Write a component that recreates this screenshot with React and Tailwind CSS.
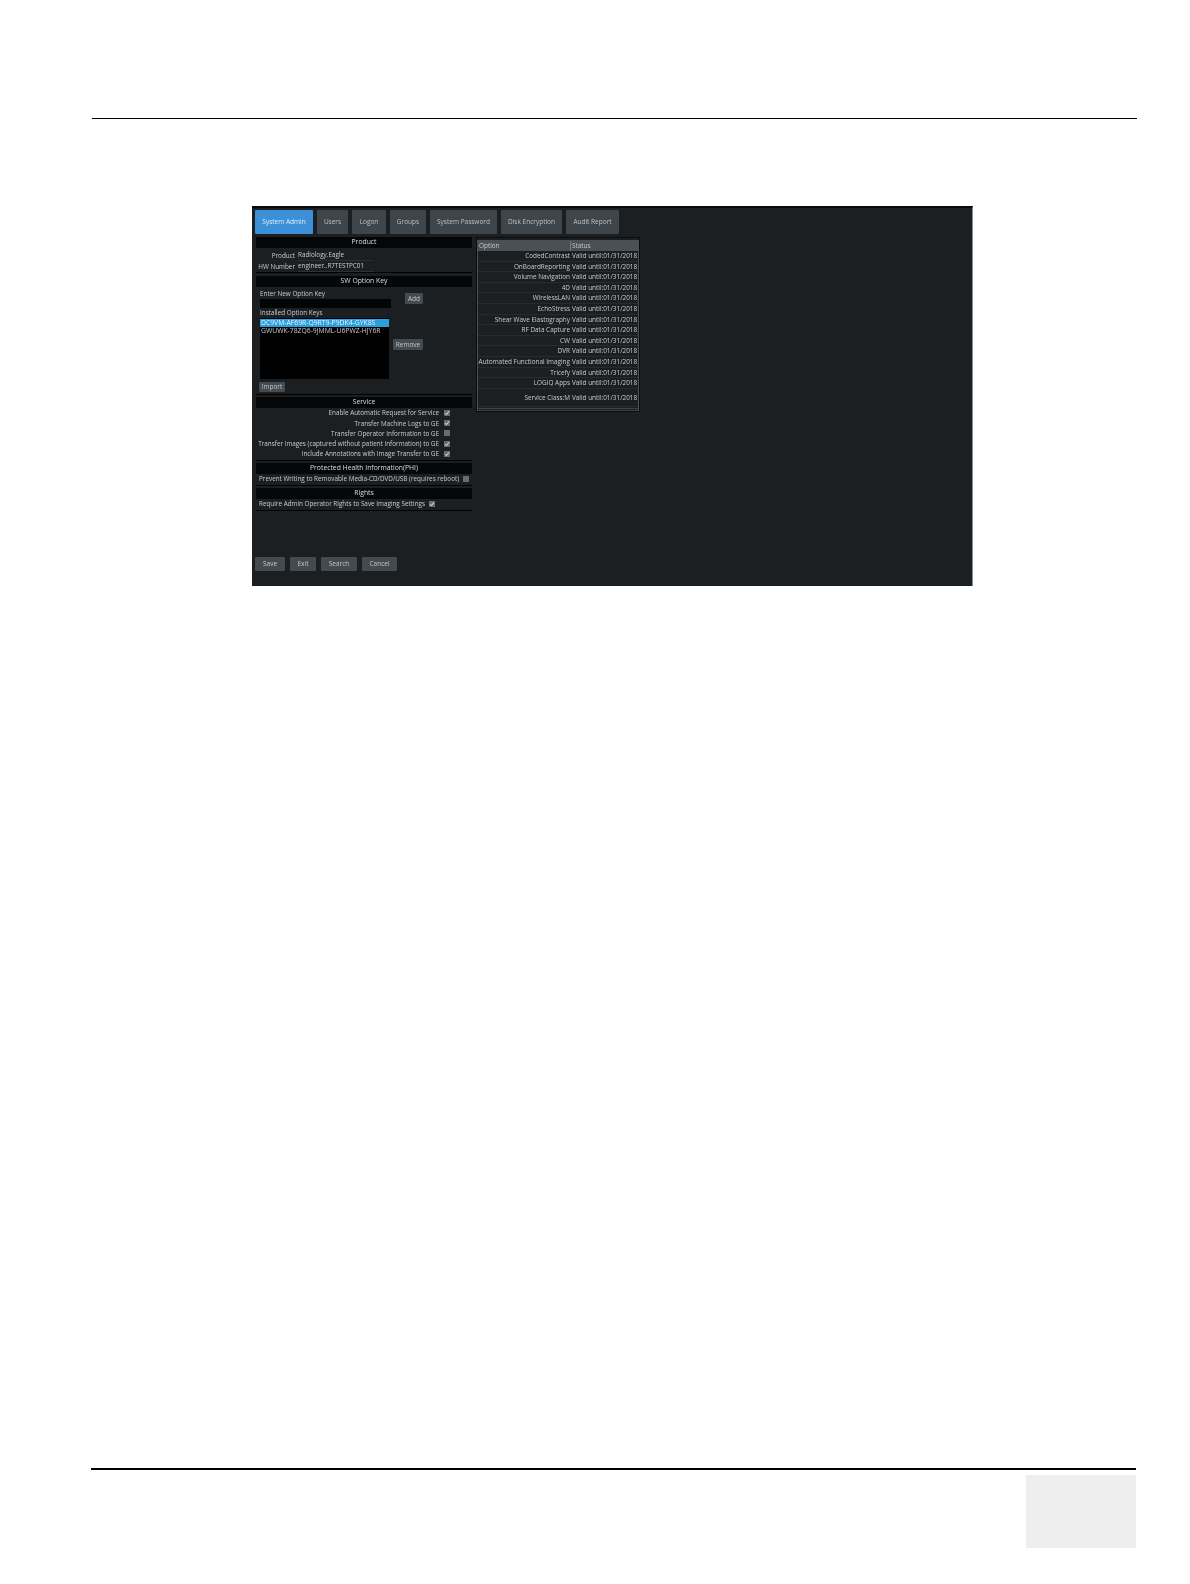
import React from 'react';

const tabs = [
    { label: 'System Admin', width: 'w-[58px]', active: true },
    { label: 'Users', width: 'w-[31px]' },
    { label: 'Logon', width: 'w-[34px]' },
    { label: 'Groups', width: 'w-[36px]' },
    { label: 'System Password', width: 'w-[67px]' },
    { label: 'Disk Encryption', width: 'w-[61px]' },
    { label: 'Audit Report', width: 'w-[53px]' },
];

const serviceRows = [
    { label: 'Enable Automatic Request for Service', checked: true },
    { label: 'Transfer Machine Logs to GE', checked: true },
    { label: 'Transfer Operator Information to GE', checked: false },
    { label: 'Transfer Images (captured without patient information) to GE', checked: true },
    { label: 'Include Annotations with Image Transfer to GE', checked: true },
];

const options = [
    'CodedContrast',
    'OnBoardReporting',
    'Volume Navigation',
    '4D',
    'WirelessLAN',
    'EchoStress',
    'Shear Wave Elastography',
    'RF Data Capture',
    'CW',
    'DVR',
    'Automated Functional Imaging',
    'Tricefy',
    'LOGIQ Apps',
];

const Checkbox = ({ checked }) => (
    <span className="flex h-[6px] w-[6px] shrink-0 items-center justify-center bg-[#666d72]">
        {checked && (
            <svg viewBox="0 0 6 6" className="h-[6px] w-[6px]" fill="none" stroke="#f2f4f5" strokeWidth="1">
                <path d="M1 3.2 2.4 4.6 5 1.4" />
            </svg>
        )}
    </span>
);

const SectionHead = ({ title }) => (
    <div className="flex h-[11px] items-center justify-center bg-[#050607] text-[6.8px] text-[#dcdfe0]">{title}</div>
);

const SmallButton = ({ label, className }) => (
    <div className={`flex items-center justify-center rounded-[1px] bg-[#434b50] text-[6.5px] text-[#c3c7ca] ${className}`}>
        {label}
    </div>
);

const OptionRow = ({ option, className = 'h-[10.6px]' }) => (
    <div className={`flex items-center border-b border-[#262b2f] ${className}`}>
        <span className="w-[92px] text-right whitespace-nowrap">{option}</span>
        <span className="flex-1 pl-[2px] whitespace-nowrap">Valid until:01/31/2018</span>
    </div>
);

const App = () => {
    return (
        <div className="relative flex h-[1584px] w-[1190px] flex-col bg-white font-['Open_Sans',sans-serif]">
            <div className="mt-[118px] ml-[92px] h-px w-[1045px] bg-black" />

            {/* Screenshot of the admin page */}
            <div className="mt-[87px] ml-[252px] h-[380px] w-[721px] border-t-2 border-r border-t-[#08090a] border-r-[#8a8d8f] bg-[#1b1f22] blur-[0.35px]">
                <div className="flex gap-[4px] pt-[2px] pl-[3px]">
                    {tabs.map((tab) => (
                        <div
                            key={tab.label}
                            className={`flex h-[24px] items-center justify-center rounded-[1px] text-[6.5px] whitespace-nowrap ${tab.width} ${tab.active ? 'bg-[#3c90d8] text-[#e3eff9]' : 'bg-[#3e464b] text-[#bcc1c4]'}`}
                        >
                            {tab.label}
                        </div>
                    ))}
                </div>

                <div className="mt-[3px] ml-[4px] flex items-start gap-[4px]">
                    {/* Left column */}
                    <div className="flex w-[216px] flex-col gap-[2px] text-[6.35px] text-[#c8cccf]">
                        <section className="mb-px border-b border-black">
                            <SectionHead title="Product" />
                            <div className="flex h-[24px] flex-col pt-[2px]">
                                <div className="flex h-[12px] items-center">
                                    <span className="w-[39px] text-right">Product</span>
                                    <span className="ml-[3px] w-[74px] border-b border-[#2b3135]">Radiology.Eagle</span>
                                </div>
                                <div className="flex h-[12px] items-center">
                                    <span className="w-[39px] text-right whitespace-nowrap">HW Number</span>
                                    <span className="ml-[3px] w-[76px] border-b border-[#2b3135]">engineer..R7TESTPC01</span>
                                </div>
                            </div>
                        </section>

                        <section className="border-b border-black">
                            <SectionHead title="SW Option Key" />
                            <div className="flex h-[107px] pl-[4px]">
                                <div className="w-[131px]">
                                    <div className="flex h-[12px] items-end">Enter New Option Key</div>
                                    <div className="h-[9px] bg-[#030404]" />
                                    <div className="flex h-[10px] items-end">Installed Option Keys</div>
                                    <div className="mr-[2px] h-[61px] bg-black pt-px text-[6.8px]">
                                        <div className="flex h-[8px] items-center bg-[#2a9fdd] pl-px whitespace-nowrap text-[#e8f5fc]">DC9VM-AF69R-Q9RT9-P9DK4-GYK8S</div>
                                        <div className="flex h-[8px] items-center pl-px whitespace-nowrap">GWUWK-78ZQ6-9JMML-U6PWZ-HJY6R</div>
                                    </div>
                                    <SmallButton label="Import" className="mt-[3px] -ml-[1px] h-[10px] w-[26px]" />
                                </div>
                                <div className="flex flex-col items-end">
                                    <SmallButton label="Add" className="mt-[6px] h-[11px] w-[18px]" />
                                    <SmallButton label="Remove" className="mt-[35px] ml-[2px] h-[11px] w-[30px]" />
                                </div>
                            </div>
                        </section>

                        <section className="border-b border-black">
                            <SectionHead title="Service" />
                            <div className="flex h-[52px] flex-col">
                                {serviceRows.map((row) => (
                                    <div key={row.label} className="flex h-[10.2px] w-[194px] items-center justify-end whitespace-nowrap">
                                        <span>{row.label}</span>
                                        <span className="ml-[5px]">
                                            <Checkbox checked={row.checked} />
                                        </span>
                                    </div>
                                ))}
                            </div>
                        </section>

                        <section className="border-b border-black">
                            <SectionHead title="Protected Health Information(PHI)" />
                            <div className="flex h-[11px] items-center pb-px pl-[3px] whitespace-nowrap">
                                <span className="w-[204px]">Prevent Writing to Removable Media-CD/DVD/USB (requires reboot)</span>
                                <Checkbox checked={false} />
                            </div>
                        </section>

                        <section className="border-b border-black">
                            <SectionHead title="Rights" />
                            <div className="flex h-[11px] items-center pb-px pl-[3px] whitespace-nowrap">
                                <span className="w-[170px]">Require Admin Operator Rights to Save Imaging Settings</span>
                                <Checkbox checked />
                            </div>
                        </section>

                        {/* Bottom buttons */}
                        <div className="mt-[44px] -ml-px flex gap-[5px]">
                            <SmallButton label="Save" className="h-[14px] w-[30px]" />
                            <SmallButton label="Exit" className="h-[14px] w-[26px]" />
                            <SmallButton label="Search" className="h-[14px] w-[36px]" />
                            <SmallButton label="Cancel" className="h-[14px] w-[35px]" />
                        </div>
                    </div>

                    {/* Option table */}
                    <div className="h-[175px] w-[164px] border border-[#0a0c0d] bg-[#1b1f22] pt-[2px] text-[6.4px] text-[#c8cccf]">
                        <div className="h-[171px] border border-[#4a5054]">
                            <div className="flex h-[10px] items-center bg-[#4a5155] text-[#c6cacc]">
                                <span className="w-[93px] border-r border-[#777d81] pl-px">Option</span>
                                <span className="pl-px">Status</span>
                            </div>
                            {options.map((option) => (
                                <OptionRow key={option} option={option} />
                            ))}
                            <OptionRow option="Service Class:M" className="mt-[1px] h-[17px]" />
                            <div className="h-[2px] border-b border-[#3d4347]" />
                            <div className="h-[2px] border-b border-[#3d4347]" />
                        </div>
                    </div>
                </div>
            </div>

            <div className="mt-[882px] ml-[91px] h-[2px] w-[1045px] bg-black" />
            <div className="mt-[5px] ml-[1026px] h-[73px] w-[110px] bg-[#eeeeee]" />
        </div>
    );
};

export default App;
